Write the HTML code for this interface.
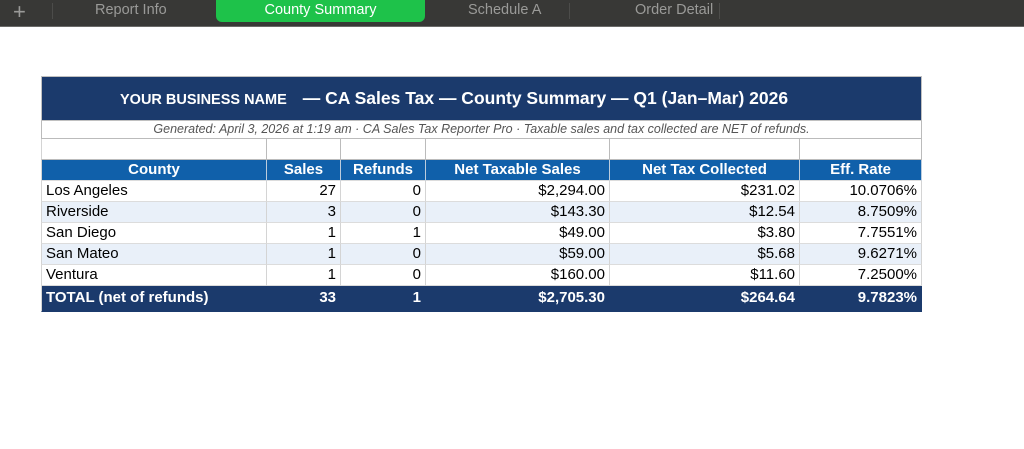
<!DOCTYPE html>
<html><head><meta charset="utf-8"><style>
*{margin:0;padding:0;box-sizing:border-box}
body{width:1024px;height:449px;background:#fff;font-family:"Liberation Sans",sans-serif;position:relative;overflow:hidden}
.bar{position:absolute;left:0;top:0;width:1024px;height:27px;background:#383836;border-bottom:1px solid #6a6a68}
.t{position:absolute;top:2px;font-size:14.5px;color:#9a9a98}
.sep{position:absolute;top:3px;width:1px;height:16px;background:#4c4c4a}
.pill{position:absolute;left:216px;top:0;width:209px;height:22px;background:#1ec24a;border-radius:0 0 6px 6px;color:#fff;font-size:14.5px;text-align:center;line-height:21px}
.tbl{position:absolute;left:41px;top:76px;width:881px}
.title{height:45px;background:#1b3a6c;color:#fff;border:1px solid #c0c0c0;line-height:43px;font-weight:bold;font-size:17.5px}
.sub{height:18px;border:1px solid #bbb;border-top:none;font-size:12.5px;font-style:italic;color:#555;text-align:center;line-height:17px}
.row{display:flex;height:21px;font-size:15px;line-height:20px}
.row div{border-right:1px solid #d4d4d4;border-bottom:1px solid #dcdcdc;padding:0 4px;text-align:right;white-space:nowrap}
.row div:first-child{text-align:left;border-left:1px solid #d4d4d4}
.c1{width:226px}.c2{width:74px}.c3{width:85px}.c4{width:184px}.c5{width:190px}.c6{width:122px}
.blank div{height:21px;border-color:#bbb}
.hd{background:#1060aa;color:#fff;font-weight:bold}
.hd div{text-align:center!important;border-right:1px solid #bcd}
.alt{background:#e9f0f9}
.tot{background:#1b3a6c;color:#fff;font-weight:bold;height:26px;line-height:24px}
.tot div{border-color:#1b3a6c}
</style></head><body>
<div class="bar">
<div class="t" style="left:13px;top:-1px;font-size:22px;color:#9a9a98">+</div>
<div class="sep" style="left:52px"></div>
<div class="t" style="left:95px">Report Info</div>
<div class="pill">County Summary</div>
<div class="t" style="left:468px">Schedule A</div>
<div class="sep" style="left:569px"></div>
<div class="t" style="left:635px">Order Detail</div>
<div class="sep" style="left:719px"></div>
</div>
<div class="tbl">
<div class="title"><span style="font-size:14.5px;margin-left:78px">YOUR BUSINESS NAME</span><span style="margin-left:16px">— CA Sales Tax — County Summary — Q1 (Jan–Mar) 2026</span></div>
<div class="sub">Generated: April 3, 2026 at 1:19 am · CA Sales Tax Reporter Pro · Taxable sales and tax collected are NET of refunds.</div>
<div class="row blank"><div class="c1"></div><div class="c2"></div><div class="c3"></div><div class="c4"></div><div class="c5"></div><div class="c6"></div></div>
<div class="row hd"><div class="c1">County</div><div class="c2">Sales</div><div class="c3">Refunds</div><div class="c4">Net Taxable Sales</div><div class="c5">Net Tax Collected</div><div class="c6">Eff. Rate</div></div>
<div class="row"><div class="c1">Los Angeles</div><div class="c2">27</div><div class="c3">0</div><div class="c4">$2,294.00</div><div class="c5">$231.02</div><div class="c6">10.0706%</div></div>
<div class="row alt"><div class="c1">Riverside</div><div class="c2">3</div><div class="c3">0</div><div class="c4">$143.30</div><div class="c5">$12.54</div><div class="c6">8.7509%</div></div>
<div class="row"><div class="c1">San Diego</div><div class="c2">1</div><div class="c3">1</div><div class="c4">$49.00</div><div class="c5">$3.80</div><div class="c6">7.7551%</div></div>
<div class="row alt"><div class="c1">San Mateo</div><div class="c2">1</div><div class="c3">0</div><div class="c4">$59.00</div><div class="c5">$5.68</div><div class="c6">9.6271%</div></div>
<div class="row"><div class="c1">Ventura</div><div class="c2">1</div><div class="c3">0</div><div class="c4">$160.00</div><div class="c5">$11.60</div><div class="c6">7.2500%</div></div>
<div class="row tot"><div class="c1">TOTAL (net of refunds)</div><div class="c2">33</div><div class="c3">1</div><div class="c4">$2,705.30</div><div class="c5">$264.64</div><div class="c6">9.7823%</div></div>
</div>
</body></html>
